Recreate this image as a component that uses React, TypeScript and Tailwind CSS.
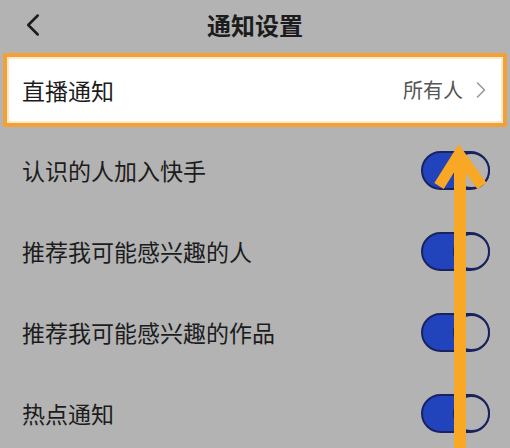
import { ChevronLeft, ChevronRight } from "lucide-react";

const ROWS = ["认识的人加入快手", "推荐我可能感兴趣的人", "推荐我可能感兴趣的作品", "热点通知"];

export default function App() {
  return (
    <div
      className="relative h-[448px] w-[510px] overflow-hidden bg-[#b3b3b3] text-[#1c1c1c]"
      style={{ fontFamily: '"Noto Sans CJK SC", "Noto Sans", sans-serif' }}
    >
      {/* 顶部 */}
      <header className="grid h-[53px] grid-cols-[60px_1fr_60px] items-center pb-[3px]">
        <ChevronLeft className="ml-[14px] h-[38px] w-[38px] text-[#1c1c1c]" strokeWidth={1.6} />
        <h1 className="text-center text-[24px] font-bold">通知设置</h1>
        <span />
      </header>

      {/* 高亮行 */}
      <div className="mx-[3px] flex h-[74px] items-center justify-between border-[4px] border-[#f2a038] bg-white pl-[15px] pr-[8px] shadow-[inset_0_0_0_2px_#fde9c8]">
        <span className="text-[23px]">直播通知</span>
        <span className="flex items-center gap-[4px] text-[20px] text-[#555]">
          所有人
          <ChevronRight className="h-[28px] w-[28px] text-[#9a9a9a]" strokeWidth={1.4} />
        </span>
      </div>

      <div className="mt-[3px] flex flex-col">
        {ROWS.map((r) => (
          <Row key={r} label={r} />
        ))}
      </div>

      {/* 箭头 */}
      <svg
        className="pointer-events-none absolute inset-0"
        width={510}
        height={448}
        viewBox="0 0 510 448"
      >
        <line x1={460} y1={448} x2={460} y2={160} stroke="#f9a825" strokeWidth={12} />
        <polyline
          points="439,186 459,154 482,186"
          fill="none"
          stroke="#f9a825"
          strokeWidth={11}
          strokeLinecap="butt"
          strokeLinejoin="miter"
        />
      </svg>
    </div>
  );
}

function Row({ label }: { label: string }) {
  return (
    <div className="flex h-[81px] items-center justify-between pl-[22px] pr-[20px]">
      <span className="text-[23px]">{label}</span>
      <Toggle />
    </div>
  );
}

function Toggle() {
  return (
    <div className="flex h-[39px] w-[69px] items-center justify-end rounded-full border-[2px] border-[#1a2360] bg-[#2143bb]">
      <div className="h-[37px] w-[37px] -mr-[2px] rounded-full border-[2px] border-[#1a2360] bg-[#b3b3b3]" />
    </div>
  );
}
